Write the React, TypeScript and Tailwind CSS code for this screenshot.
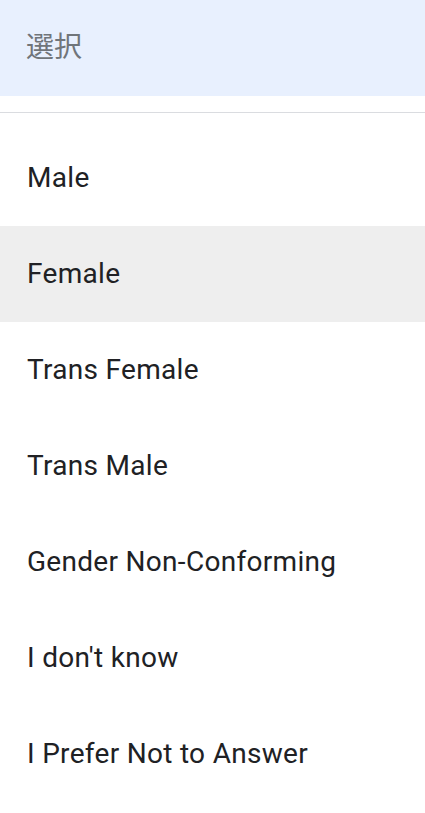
export default function App() {
  const items = [
    "Male",
    "Female",
    "Trans Female",
    "Trans Male",
    "Gender Non-Conforming",
    "I don't know",
    "I Prefer Not to Answer",
  ];
  return (
    <div className="w-[425px] h-[813px] bg-white overflow-hidden" style={{ fontFamily: "Roboto, 'Noto Sans CJK JP', sans-serif" }}>
      <div className="h-[96px] bg-[#e8f0fe] flex items-center px-[26px] text-[28px] text-[#70757a]">
        選択
      </div>
      <div className="h-[16px]" />
      <div className="h-px bg-[#dadce0]" />
      <div className="pt-[17px] flex flex-col">
        {items.map((t, i) => (
          <div
            key={t}
            className={`h-[96px] flex items-center px-[27px] text-[28px] tracking-[0.3px] text-[#202124] ${i === 1 ? "bg-[#eeeeee]" : ""}`}
          >
            {t}
          </div>
        ))}
      </div>
    </div>
  );
}
